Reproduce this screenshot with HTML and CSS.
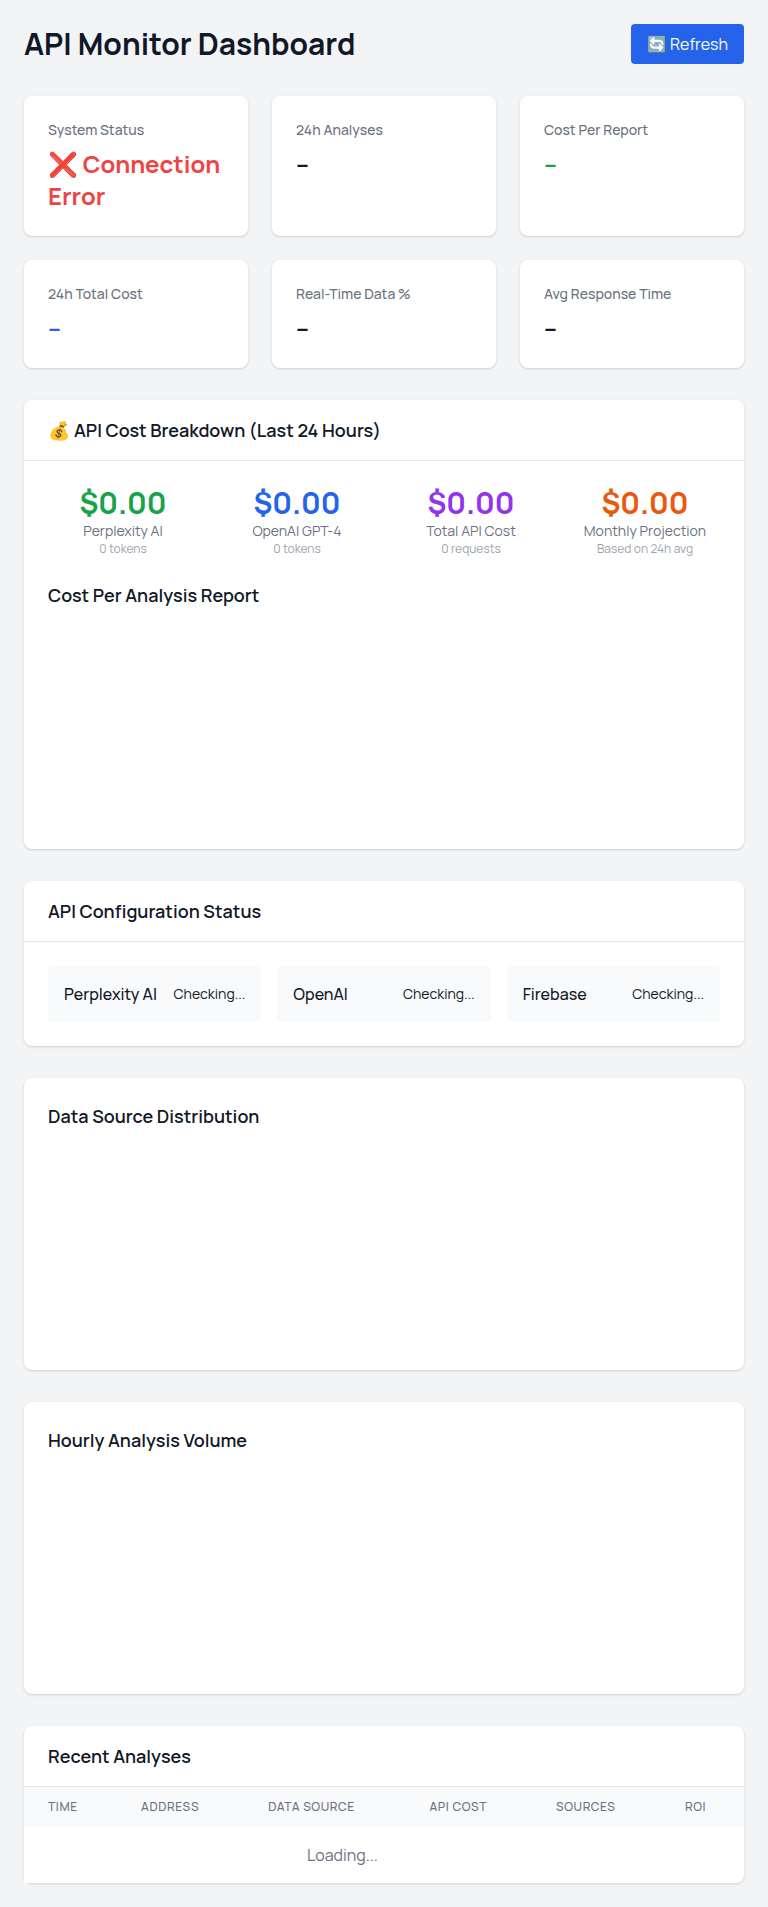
FILE: index.html
```html
<!DOCTYPE html>
<html lang="en">
<head>
<meta charset="utf-8">
<meta name="viewport" content="width=device-width, initial-scale=1">
<title>API Monitor Dashboard</title>
<link rel="stylesheet" href="styles.css">
</head>
<body>
<main class="page">
  <header class="page-header">
    <h1 class="page-title">API Monitor Dashboard</h1>
    <button class="refresh" type="button">🔄 Refresh</button>
  </header>

  <section class="stats" aria-label="Summary">
    <article class="card stat"><h3 class="stat-label">System Status</h3><p class="stat-value error">❌ Connection Error</p></article>
    <article class="card stat"><h3 class="stat-label">24h Analyses</h3><p class="stat-value">–</p></article>
    <article class="card stat"><h3 class="stat-label">Cost Per Report</h3><p class="stat-value green">–</p></article>
    <article class="card stat"><h3 class="stat-label">24h Total Cost</h3><p class="stat-value blue">–</p></article>
    <article class="card stat"><h3 class="stat-label">Real-Time Data %</h3><p class="stat-value">–</p></article>
    <article class="card stat"><h3 class="stat-label">Avg Response Time</h3><p class="stat-value">–</p></article>
  </section>

  <section class="card">
    <div class="card-header"><h2 class="heading">💰 API Cost Breakdown (Last 24 Hours)</h2></div>
    <div class="card-body">
      <div class="costs">
        <div class="cost"><p class="cost-value green">$0.00</p><p class="cost-name">Perplexity AI</p><p class="cost-note">0 tokens</p></div>
        <div class="cost"><p class="cost-value blue">$0.00</p><p class="cost-name">OpenAI GPT-4</p><p class="cost-note">0 tokens</p></div>
        <div class="cost"><p class="cost-value purple">$0.00</p><p class="cost-name">Total API Cost</p><p class="cost-note">0 requests</p></div>
        <div class="cost"><p class="cost-value orange">$0.00</p><p class="cost-name">Monthly Projection</p><p class="cost-note">Based on 24h avg</p></div>
      </div>
      <h3 class="heading">Cost Per Analysis Report</h3>
      <div class="chart"></div>
    </div>
  </section>

  <section class="card">
    <div class="card-header"><h2 class="heading">API Configuration Status</h2></div>
    <div class="card-body services">
      <div class="service"><span class="service-name">Perplexity AI</span><span class="service-state">Checking...</span></div>
      <div class="service"><span class="service-name">OpenAI</span><span class="service-state">Checking...</span></div>
      <div class="service"><span class="service-name">Firebase</span><span class="service-state">Checking...</span></div>
    </div>
  </section>

  <section class="card card-body">
    <h2 class="heading">Data Source Distribution</h2>
    <div class="chart"></div>
  </section>

  <section class="card card-body">
    <h2 class="heading">Hourly Analysis Volume</h2>
    <div class="chart"></div>
  </section>

  <section class="card">
    <div class="card-header"><h2 class="heading">Recent Analyses</h2></div>
    <table class="analyses">
      <thead>
        <tr><th scope="col">Time</th><th scope="col">Address</th><th scope="col">Data Source</th><th scope="col">API Cost</th><th scope="col">Sources</th><th scope="col">ROI</th></tr>
      </thead>
      <tbody>
        <tr><td class="loading" colspan="5">Loading...</td></tr>
      </tbody>
    </table>
  </section>
</main>
</body>
</html>
```

FILE: styles.css
```css
*, *::before, *::after { box-sizing: border-box; }

body {
  margin: 0;
  background: #f3f4f6;
  color: #111827;
  font: 400 16px/24px Manrope, Inter, "Noto Color Emoji", sans-serif;
}

h1, h2, h3, p { margin: 0; }

.page {
  max-width: 1280px;
  margin: 0 auto;
  padding: 24px;
  display: flex;
  flex-direction: column;
  gap: 32px;
}

.page-header {
  display: flex;
  justify-content: space-between;
  align-items: center;
}

.page-title { font-size: 30px; line-height: 36px; font-weight: 700; }

.refresh {
  border: 0;
  border-radius: 4px;
  padding: 8px 16px;
  background: #2563eb;
  color: #fff;
  font: inherit;
  cursor: pointer;
}

.card {
  background: #fff;
  border-radius: 8px;
  box-shadow: 0 1px 3px rgba(0, 0, 0, 0.1), 0 1px 2px rgba(0, 0, 0, 0.06);
}
.card-header { padding: 16px 24px; border-bottom: 1px solid #e5e7eb; }
.card-body { padding: 24px; }

.heading { font-size: 18px; line-height: 28px; font-weight: 600; }

.stats { display: grid; grid-template-columns: repeat(3, minmax(0, 1fr)); gap: 24px; }
.stat { padding: 24px; }
.stat-label { margin-bottom: 8px; font-size: 14px; line-height: 20px; font-weight: 500; color: #6b7280; }
.stat-value { font-size: 24px; line-height: 32px; font-weight: 700; }

.error { color: #ef4444; }
.green { color: #16a34a; }
.blue { color: #2563eb; }
.purple { color: #9333ea; }
.orange { color: #ea580c; }

.costs {
  display: grid;
  grid-template-columns: repeat(4, minmax(0, 1fr));
  gap: 24px;
  margin-bottom: 24px;
  text-align: center;
}
.cost-value { font-size: 30px; line-height: 36px; font-weight: 700; }
.cost-name { font-size: 14px; line-height: 20px; color: #6b7280; }
.cost-note { font-size: 12px; line-height: 16px; color: #9ca3af; }

.chart { height: 200px; margin-top: 16px; }

.services { display: grid; grid-template-columns: repeat(3, minmax(0, 1fr)); gap: 16px; }
.service {
  display: flex;
  justify-content: space-between;
  align-items: center;
  padding: 16px;
  border-radius: 4px;
  background: #f9fafb;
}
.service-name { font-weight: 500; }
.service-state { font-size: 14px; line-height: 20px; }

.analyses { width: 100%; border-collapse: collapse; }
.analyses thead { background: #f9fafb; }
.analyses th {
  padding: 12px 24px;
  font-size: 12px;
  line-height: 16px;
  font-weight: 500;
  letter-spacing: 0.05em;
  text-align: left;
  text-transform: uppercase;
  white-space: nowrap;
  color: #6b7280;
}
.loading { padding: 16px 24px; text-align: center; color: #6b7280; background: #fff; }
```
